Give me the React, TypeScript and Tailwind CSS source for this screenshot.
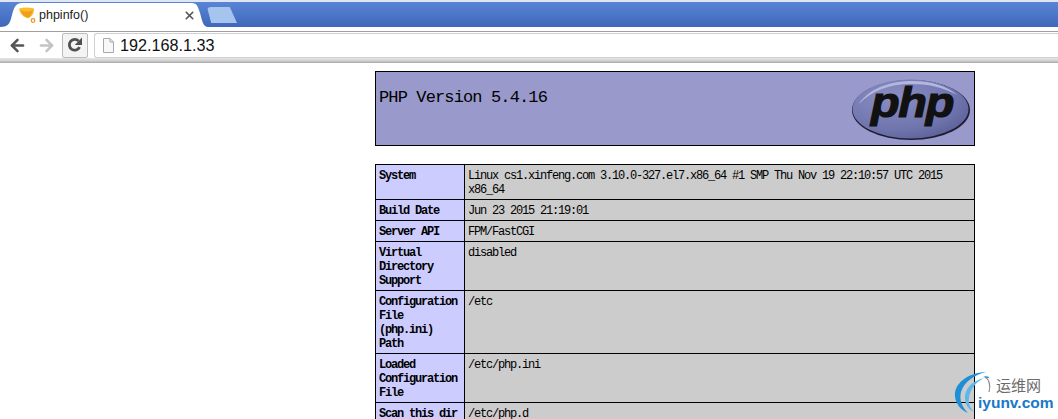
import { X, ArrowLeft, ArrowRight } from "lucide-react";

const rows: [string[], string[]][] = [
  [["System"], ["Linux cs1.xinfeng.com 3.10.0-327.el7.x86_64 #1 SMP Thu Nov 19 22:10:57 UTC 2015", "x86_64"]],
  [["Build Date"], ["Jun 23 2015 21:19:01"]],
  [["Server API"], ["FPM/FastCGI"]],
  [["Virtual", "Directory", "Support"], ["disabled"]],
  [["Configuration", "File", "(php.ini)", "Path"], ["/etc"]],
  [["Loaded", "Configuration", "File"], ["/etc/php.ini"]],
  [["Scan this dir"], ["/etc/php.d"]],
];

function PhpLogo() {
  return (
    <svg width="120" height="63" viewBox="0 0 120 63" className="mt-[6px] mr-[3px]">
      <defs>
        <radialGradient id="oval" cx="0.35" cy="0.3" r="0.8">
          <stop offset="0" stopColor="#8a8ec4" />
          <stop offset="0.7" stopColor="#6f74ad" />
          <stop offset="1" stopColor="#5a5e96" />
        </radialGradient>
      </defs>
      <ellipse cx="60" cy="32" rx="59" ry="30" fill="#1d1d2e" />
      <ellipse cx="59.5" cy="31" rx="58" ry="29.5" fill="url(#oval)" />
      <path d="M8 26C18 10 40 3 62 3c18 0 34 5 44 14C92 9 76 6 60 6 38 6 20 13 8 26z" fill="#b4b7dc" />
      <text
        x="20"
        y="39"
        textLength="82"
        lengthAdjust="spacingAndGlyphs"
        fontFamily="'Liberation Sans', sans-serif"
        fontStyle="italic"
        fontWeight="700"
        fontSize="42"
        fill="#111"
        stroke="#111"
        strokeWidth="1.2"
      >
        php
      </text>
    </svg>
  );
}

function Watermark() {
  return (
    <div className="absolute left-[954px] top-[371px] w-[104px] h-[48px]">
      <svg width="50" height="46" viewBox="0 0 50 46" className="absolute left-0 top-0">
        <path d="M32 1C13 2 0 13 1 25c.5 8 6 14 13 17C8 36 5 29 7 21 10 11 20 4 32 1z" fill="#1c8fd6" />
        <path d="M30 7C18 10 10 18 11 28c.5 6 4 11 9 13-4-4-6-9-5-14 1-9 7-16 15-20z" fill="#5cb8ea" />
        <path d="M29 6c2-1 4-1 6 0 1 0 0 1-1 1-2 0-3-1-5-1z" fill="#1c8fd6" />
        <path d="M31 6c4 2 6 9 4 15" fill="none" stroke="#8a8a8a" strokeWidth="1.2" />
      </svg>
      <div className="absolute left-[42px] top-[5px] text-[15px] leading-[18px] text-[#6b6b6b] font-['Noto_Sans_CJK_SC',sans-serif]">
        运维网
      </div>
      <div className="absolute left-[24px] top-[22px] text-[15.5px] leading-[20px] font-bold text-[#1878c8] font-['Liberation_Sans',sans-serif]">
        iyunv.com
      </div>
    </div>
  );
}

export default function App() {
  return (
    <div className="relative h-[419px] w-[1058px] overflow-hidden bg-white font-['Liberation_Sans',sans-serif]">
      {/* tab strip */}
      <div className="h-[32px] border-b border-[#a0a0a0] bg-white">
        <div className="flex h-[27px] items-end border-t-2 border-[#dfe6f3] bg-gradient-to-b from-[#5a84d6] to-[#3f68bb] pl-[6px]">
          <div className="relative flex h-[24px] w-[201px] items-center pl-[13px]">
            <svg width="201" height="24" viewBox="0 0 201 24" className="absolute left-0 top-0 overflow-visible">
              <path d="M-6 24C3 24 4 20 6 12 8 4 10 0 16 0H186c5 0 6 4 8 10 2 7 3 14 8 14z" fill="#fff" />
            </svg>
            <svg width="17" height="16" viewBox="0 0 17 16" className="relative">
              <path d="M0 1.5C5 0 10 0 15 1.5c0 5-2 8.5-6 9.5C5 11 1 7 0 1.5z" fill="#f8bd2c" />
              <path d="M1 3c4 2 8 2 13 0-1 4-3 7-5 8C6 10 3 7 1 3z" fill="#eea01a" />
              <circle cx="14" cy="13.5" r="1.8" fill="#fff" stroke="#f09020" strokeWidth="1.2" />
            </svg>
            <span className="relative ml-[3px] text-[12.5px] leading-none text-[#222]">phpinfo()</span>
            <X size={13} strokeWidth={3} className="absolute left-[177px] top-[6px] text-[#555]" />
          </div>
          <div className="mb-[4px] ml-0 h-[16px] w-[30px] rounded-t-[4px] bg-[#a5c4ee] [clip-path:polygon(0_0,76%_0,100%_100%,14%_100%)]" />
        </div>
      </div>
      {/* toolbar */}
      <div className="flex h-[26px] items-center bg-white">
        <ArrowLeft size={19} strokeWidth={3.2} className="ml-[8px] text-[#555]" />
        <ArrowRight size={19} strokeWidth={3.2} className="ml-[10px] text-[#c4c4c4]" />
        <div className="ml-[6px] flex h-[25px] w-[26px] items-center justify-center rounded-[2px] border border-[#bcbcbc] bg-[#f4f4f4]">
          <svg width="18" height="18" viewBox="0 0 18 18">
            <path d="M13.6 11.2A5.4 5.4 0 1 1 12.6 5" fill="none" stroke="#505050" strokeWidth="2.8" />
            <path d="M16 1.5V9H8.8z" fill="#505050" />
          </svg>
        </div>
        <div className="ml-[6px] flex h-[25px] flex-1 items-center rounded-l-[3px] border border-r-0 border-[#d0d0d0] bg-white pl-[7px]">
          <svg width="13" height="15" viewBox="0 0 13 15">
            <path d="M1.5.5H8L11.5 4v10.5h-10z" fill="#f8f8f8" stroke="#a8a8a8" />
            <path d="M8 .5V4h3.5" fill="none" stroke="#a8a8a8" />
          </svg>
          <span className="ml-[5px] text-[16.2px] leading-none text-[#111]">192.168.1.33</span>
        </div>
      </div>
      <div className="h-[5px] bg-gradient-to-b from-[#e6e6e6] via-[#d4d4d4] to-[#a8a8a8]" />
      {/* page */}
      <div className="ml-[375px] w-[600px] pt-[8px] text-[12px] tracking-[-1.2px] text-black font-['Liberation_Mono',monospace]">
        <div className="flex h-[75px] justify-between border border-black bg-[#9999cc]">
          <h1 className="pl-[3px] pt-[14px] text-[17px] leading-[24px] tracking-[-0.87px]">PHP Version 5.4.16</h1>
          <PhpLogo />
        </div>
        <table className="mt-[18px] w-[600px] table-fixed border-collapse">
          <colgroup>
            <col className="w-[89px]" />
            <col />
          </colgroup>
          <tbody>
            {rows.map(([label, value]) => (
              <tr key={label[0]}>
                <td className="border border-black bg-[#ccccff] px-[3px] pt-[4px] pb-[2px] align-top font-bold leading-[14px]">
                  {label.map((t) => (
                    <div key={t} className="whitespace-nowrap">{t}</div>
                  ))}
                </td>
                <td className="border border-black bg-[#cccccc] px-[3px] pt-[4px] pb-[2px] align-top leading-[14px]">
                  {value.map((t) => (
                    <div key={t} className="whitespace-nowrap">{t}</div>
                  ))}
                </td>
              </tr>
            ))}
          </tbody>
        </table>
      </div>
      <Watermark />
    </div>
  );
}
